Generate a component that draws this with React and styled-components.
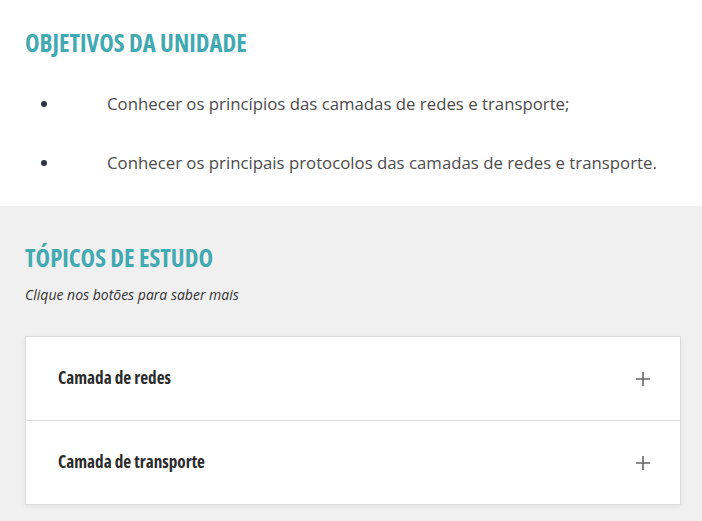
import React from "react";
import styled, { createGlobalStyle } from "styled-components";

const Global = createGlobalStyle`
  html, body { margin: 0; padding: 0; background: #f0f0f0; }
  body { font-family: "Open Sans", "Liberation Sans", sans-serif; }
`;

const Page = styled.div`
  width: 702px;
  min-height: 521px;
  display: flex;
  flex-direction: column;
`;

const WhiteSection = styled.section`
  background: #ffffff;
  padding: 28px 25px 0 25px;
  height: 206px;
  box-sizing: border-box;
`;

const GraySection = styled.section`
  background: #f0f0f0;
  padding: 37px 21px 18px 25px;
  flex: 1;
`;

const Heading = styled.h2`
  margin: 0;
  font-family: "Open Sans", sans-serif;
  font-stretch: 75%;
  font-weight: 700;
  font-size: 24.6px;
  line-height: 30px;
  color: #41a9b1;
`;

const List = styled.ul`
  list-style: none;
  margin: 35px 0 0 0;
  padding: 0;
  display: flex;
  flex-direction: column;
  gap: 37px;
`;

const Item = styled.li`
  display: flex;
  align-items: center;
  font-size: 16.8px;
  line-height: 22px;
  color: #4b4b4b;
`;

const Bullet = styled.span`
  width: 6px;
  height: 6px;
  border-radius: 50%;
  background: #2f3445;
  margin-left: 16px;
  margin-right: 60px;
  flex-shrink: 0;
`;

const Hint = styled.p`
  margin: 13px 0 0 0;
  font-style: italic;
  font-size: 14px;
  line-height: 18px;
  color: #333;
`;

const Card = styled.div`
  margin-top: 32px;
  background: #fff;
  border: 1px solid #dcdcdc;
  box-shadow: 0 2px 6px rgba(0, 0, 0, 0.06);
`;

const Row = styled.div`
  height: 83px;
  display: flex;
  align-items: center;
  justify-content: space-between;
  padding: 0 29px 0 32px;
  border-top: ${(p) => (p.$first ? "none" : "1px solid #dcdcdc")};
`;

const RowTitle = styled.span`
  font-family: "Open Sans", sans-serif;
  font-stretch: 75%;
  font-weight: 700;
  font-size: 17.2px;
  line-height: 20px;
  margin-top: -2px;
  color: #2b2b2b;
`;

const Plus = () => (
  <svg width="16" height="16" viewBox="0 0 16 16">
    <path d="M8 1v14M1 8h14" stroke="#666" strokeWidth="1.6" fill="none" />
  </svg>
);

export default function App() {
  return (
    <Page>
      <Global />
      <WhiteSection>
        <Heading>OBJETIVOS DA UNIDADE</Heading>
        <List>
          <Item>
            <Bullet />
            Conhecer os princípios das camadas de redes e transporte;
          </Item>
          <Item>
            <Bullet />
            Conhecer os principais protocolos das camadas de redes e transporte.
          </Item>
        </List>
      </WhiteSection>
      <GraySection>
        <Heading>TÓPICOS DE ESTUDO</Heading>
        <Hint>Clique nos botões para saber mais</Hint>
        <Card>
          <Row $first>
            <RowTitle>Camada de redes</RowTitle>
            <Plus />
          </Row>
          <Row>
            <RowTitle>Camada de transporte</RowTitle>
            <Plus />
          </Row>
        </Card>
      </GraySection>
    </Page>
  );
}
